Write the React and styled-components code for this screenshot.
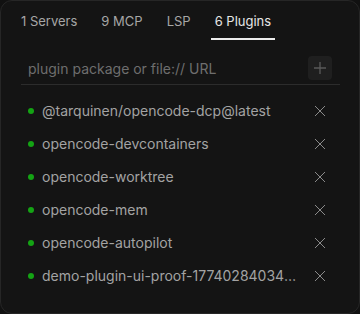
import React from "react";
import styled, { createGlobalStyle } from "styled-components";

const GlobalStyle = createGlobalStyle`
  html, body {
    margin: 0;
    padding: 0;
    background: #111111;
    font-family: Inter, "Noto Sans", sans-serif;
  }
`;

const Panel = styled.div`
  box-sizing: border-box;
  width: 360px;
  height: 314px;
  background: #141414;
  border: 1px solid #262626;
  border-radius: 12px;
  padding: 0 19px 0 20px;
  display: flex;
  flex-direction: column;
`;

const Tabs = styled.div`
  display: flex;
  gap: 16px;
  height: 39px;
  align-items: stretch;
`;

const Tab = styled.div`
  display: flex;
  align-items: center;
  padding: 3px 4px 0;
  font-size: 13px;
  color: ${(p) => (p.active ? "#e6e6e6" : "#a6a6a6")};
  border-bottom: 2px solid ${(p) => (p.active ? "#ececec" : "transparent")};
  &:first-child {
    padding-left: 0;
  }
`;

const InputRow = styled.div`
  display: flex;
  align-items: center;
  margin-top: 15px;
  height: 29px;
  padding-left: 7px;
  padding-right: 8px;
  border-bottom: 1px solid #2c2c2c;
`;

const Input = styled.input`
  flex: 1;
  background: transparent;
  border: none;
  outline: none;
  font-family: inherit;
  font-size: 14px;
  color: #d0d0d0;
  padding: 0;
  margin-top: -3px;
  &::placeholder {
    color: #6e6e6e;
  }
`;

const AddButton = styled.button`
  width: 24px;
  height: 24px;
  border-radius: 4px;
  background: #1f1f1f;
  border: none;
  padding: 0;
  display: flex;
  align-items: center;
  justify-content: center;
  margin-top: -4px;
`;

const List = styled.div`
  display: flex;
  flex-direction: column;
  margin-top: 9px;
`;

const Row = styled.div`
  display: flex;
  align-items: center;
  height: 33px;
  padding-left: 7px;
  padding-right: 8px;
`;

const Dot = styled.span`
  width: 6px;
  height: 6px;
  border-radius: 50%;
  background: #14a314;
  margin-right: 8px;
  flex-shrink: 0;
`;

const Name = styled.span`
  flex: 1;
  font-size: 14px;
  color: #a3a3a3;
  white-space: nowrap;
  overflow: hidden;
  text-overflow: ellipsis;
  max-width: 256px;
`;

const Remove = styled.span`
  width: 24px;
  display: flex;
  justify-content: center;
  margin-left: auto;
`;

const Plus = () => (
  <svg width="14" height="14" viewBox="0 0 14 14">
    <path d="M7 1v12M1 7h12" stroke="#5a5a5a" strokeWidth="1.3" />
  </svg>
);

const Cross = () => (
  <svg width="12" height="12" viewBox="0 0 12 12">
    <path d="M1 1l10 10M11 1L1 11" stroke="#8a8a8a" strokeWidth="1" />
  </svg>
);

const tabs = [
  { label: "1 Servers" },
  { label: "9 MCP" },
  { label: "LSP" },
  { label: "6 Plugins", active: true },
];

const plugins = [
  "@tarquinen/opencode-dcp@latest",
  "opencode-devcontainers",
  "opencode-worktree",
  "opencode-mem",
  "opencode-autopilot",
  "demo-plugin-ui-proof-1774028403412",
];

export default function App() {
  return (
    <>
      <GlobalStyle />
      <Panel>
        <Tabs>
          {tabs.map((t) => (
            <Tab key={t.label} active={t.active}>
              {t.label}
            </Tab>
          ))}
        </Tabs>
        <InputRow>
          <Input placeholder="plugin package or file:// URL" />
          <AddButton>
            <Plus />
          </AddButton>
        </InputRow>
        <List>
          {plugins.map((p) => (
            <Row key={p}>
              <Dot />
              <Name>{p}</Name>
              <Remove>
                <Cross />
              </Remove>
            </Row>
          ))}
        </List>
      </Panel>
    </>
  );
}
